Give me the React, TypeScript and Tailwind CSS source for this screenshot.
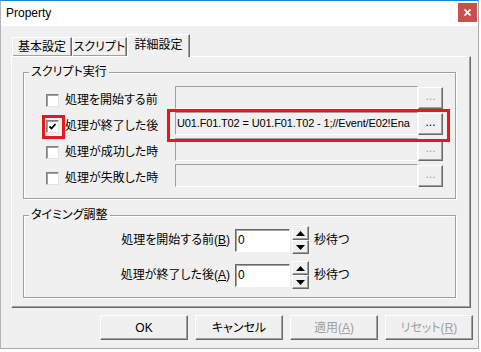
import React from "react";

const raised =
  "border border-t-white border-l-white border-r-[#696969] border-b-[#696969] shadow-[inset_-1px_-1px_0_#a0a0a0]";
const sunken =
  "border border-t-[#a0a0a0] border-l-[#a0a0a0] border-r-white border-b-white";

function Check({ checked }: { checked?: boolean }) {
  return (
    <span className="w-[13px] h-[13px] bg-white border border-t-[#808080] border-l-[#808080] border-r-[#e3e3e3] border-b-[#e3e3e3] shadow-[inset_1px_1px_0_#a0a0a0] flex items-center justify-center">
      {checked && (
        <svg width="9" height="9" viewBox="0 0 9 9">
          <path d="M1.5 4.5 L3.5 6.5 L7.5 2" fill="none" stroke="#000" strokeWidth="1.8" />
        </svg>
      )}
    </span>
  );
}

function Group({ title, className, children }: { title: string; className: string; children: React.ReactNode }) {
  return (
    <div className={"relative ml-[11px] w-[433px] border border-[#a0a0a0] shadow-[inset_1px_1px_0_#fff,1px_1px_0_#fff] " + className}>
      <span className="absolute left-[5px] top-[-9px] px-[2px] bg-[#f0f0f0] leading-[16px]">{title}</span>
      {children}
    </div>
  );
}

function Tri({ up }: { up?: boolean }) {
  return (
    <svg width="9" height="5" viewBox="0 0 9 5">
      <polygon points={up ? "4.5,0 9,5 0,5" : "0,0 9,0 4.5,5"} fill="#000" />
    </svg>
  );
}

const scripts = [
  { label: "処理を開始する前", text: "", checked: false },
  { label: "処理が終了した後", text: "U01.F01.T02 = U01.F01.T02 - 1;//Event/E02!Ena", checked: true },
  { label: "処理が成功した時", text: "", checked: false },
  { label: "処理が失敗した時", text: "", checked: false },
];

const waits = [
  { label: "処理を開始する前", key: "B" },
  { label: "処理が終了した後", key: "A" },
];

export default function App() {
  return (
    <div className="relative w-[481px] h-[352px] bg-white text-[12px] text-black font-['Liberation_Sans','Noto_Sans_CJK_JP',sans-serif] [font-feature-settings:'palt']">
      <div className="w-[479px] h-[349px] flex flex-col border border-t-[#1883d7] border-l-[#b4b4b4] border-r-[#a8a8a8] border-b-[#a8a8a8] bg-[#f0f0f0]">
        {/* title bar */}
        <div className="h-[25px] bg-white flex items-start justify-between pl-[5px] pr-[1px]">
          <span className="mt-[5px] leading-[15px]">Property</span>
          <div className="mt-[2px] w-[19px] h-[19px] bg-[#c75050] flex items-center justify-center">
            <svg width="7" height="7" viewBox="0 0 7 7">
              <path d="M0.5 0.5 L6.5 6.5 M6.5 0.5 L0.5 6.5" stroke="#fff" strokeWidth="1.8" />
            </svg>
          </div>
        </div>

        {/* tabs */}
        <div className="h-[30px] flex items-end pl-[11px]">
          <div className={"w-[60px] h-[19px] flex items-center justify-center border-b-0 " + raised}>基本設定</div>
          <div className={"w-[55px] h-[19px] flex items-center justify-center border-b-0 " + raised}>スクリプト</div>
          <div className="relative z-10 mb-[-1px] w-[63px] h-[23px] pb-[2px] bg-[#f0f0f0] flex items-center justify-center border border-b-0 border-t-white border-l-white border-r-[#696969] shadow-[inset_-1px_0_0_#a0a0a0]">
            詳細設定
          </div>
        </div>

        {/* tab panel */}
        <div className={"ml-[10px] w-[460px] h-[252px] pt-[15px] " + raised}>
          <Group title="スクリプト実行" className="h-[127px] pt-[13px]">
            <div className="flex flex-col gap-[3px]">
              {scripts.map((s) => (
                <div key={s.label} className="flex h-[23px] items-center">
                  <label className="w-[151px] pl-[22px] pt-[6px] flex items-center gap-[6px]">
                    <Check checked={s.checked} />
                    <span className="leading-[15px]">{s.label}</span>
                  </label>
                  <div className={"w-[243px] h-[23px] pl-[1px] flex items-center overflow-hidden whitespace-nowrap text-[11px] tracking-[-0.15px] bg-[#f0f0f0] " + sunken}>
                    {s.text}
                  </div>
                  <button className={"w-[25px] h-[22px] flex items-center justify-center leading-none pb-[3px] bg-[#f0f0f0] " + raised + (s.text ? " text-black" : " text-[#a0a0a0]")}>
                    ...
                  </button>
                </div>
              ))}
            </div>
          </Group>

          <Group title="タイミング調整" className="mt-[16px] h-[83px] pt-[10px]">
            <div className="flex flex-col gap-[7px]">
              {waits.map((w) => (
                <div key={w.key} className="flex h-[28px] items-center">
                  <span className="w-[206px] text-right">
                    {w.label}(<u>{w.key}</u>)
                  </span>
                  <div className="ml-[5px] w-[55px] h-[23px] pl-[2px] flex items-center bg-white border border-t-[#696969] border-l-[#696969] border-r-white border-b-white shadow-[inset_1px_1px_0_#a0a0a0]">
                    0
                  </div>
                  <div className="ml-[2px] w-[17px] h-[28px] flex flex-col">
                    <div className={"h-[14px] flex items-center justify-center bg-[#f0f0f0] " + raised}>
                      <Tri up />
                    </div>
                    <div className={"h-[14px] flex items-center justify-center bg-[#f0f0f0] " + raised}>
                      <Tri />
                    </div>
                  </div>
                  <span className="ml-[5px]">秒待つ</span>
                </div>
              ))}
            </div>
          </Group>
        </div>

        {/* dialog buttons */}
        <div className="mt-[7px] h-[25px] flex justify-end gap-[7px] pr-[5px]">
          <button className={"w-[88px] h-[25px] bg-[#f0f0f0] " + raised}>OK</button>
          <button className={"w-[88px] h-[25px] bg-[#f0f0f0] " + raised}>キャンセル</button>
          <button className={"w-[88px] h-[25px] bg-[#f0f0f0] text-[#a0a0a0] " + raised}>
            適用(<u>A</u>)
          </button>
          <button className={"w-[88px] h-[25px] bg-[#f0f0f0] text-[#a0a0a0] " + raised}>
            リセット(<u>R</u>)
          </button>
        </div>
      </div>

      {/* red highlight annotations */}
      <div className="absolute left-[167px] top-[109px] w-[283px] h-[33px] border-[3px] border-[#e8161f]" />
      <div className="absolute left-[42px] top-[115px] w-[23px] h-[24px] border-[3px] border-[#e8161f]" />
    </div>
  );
}
